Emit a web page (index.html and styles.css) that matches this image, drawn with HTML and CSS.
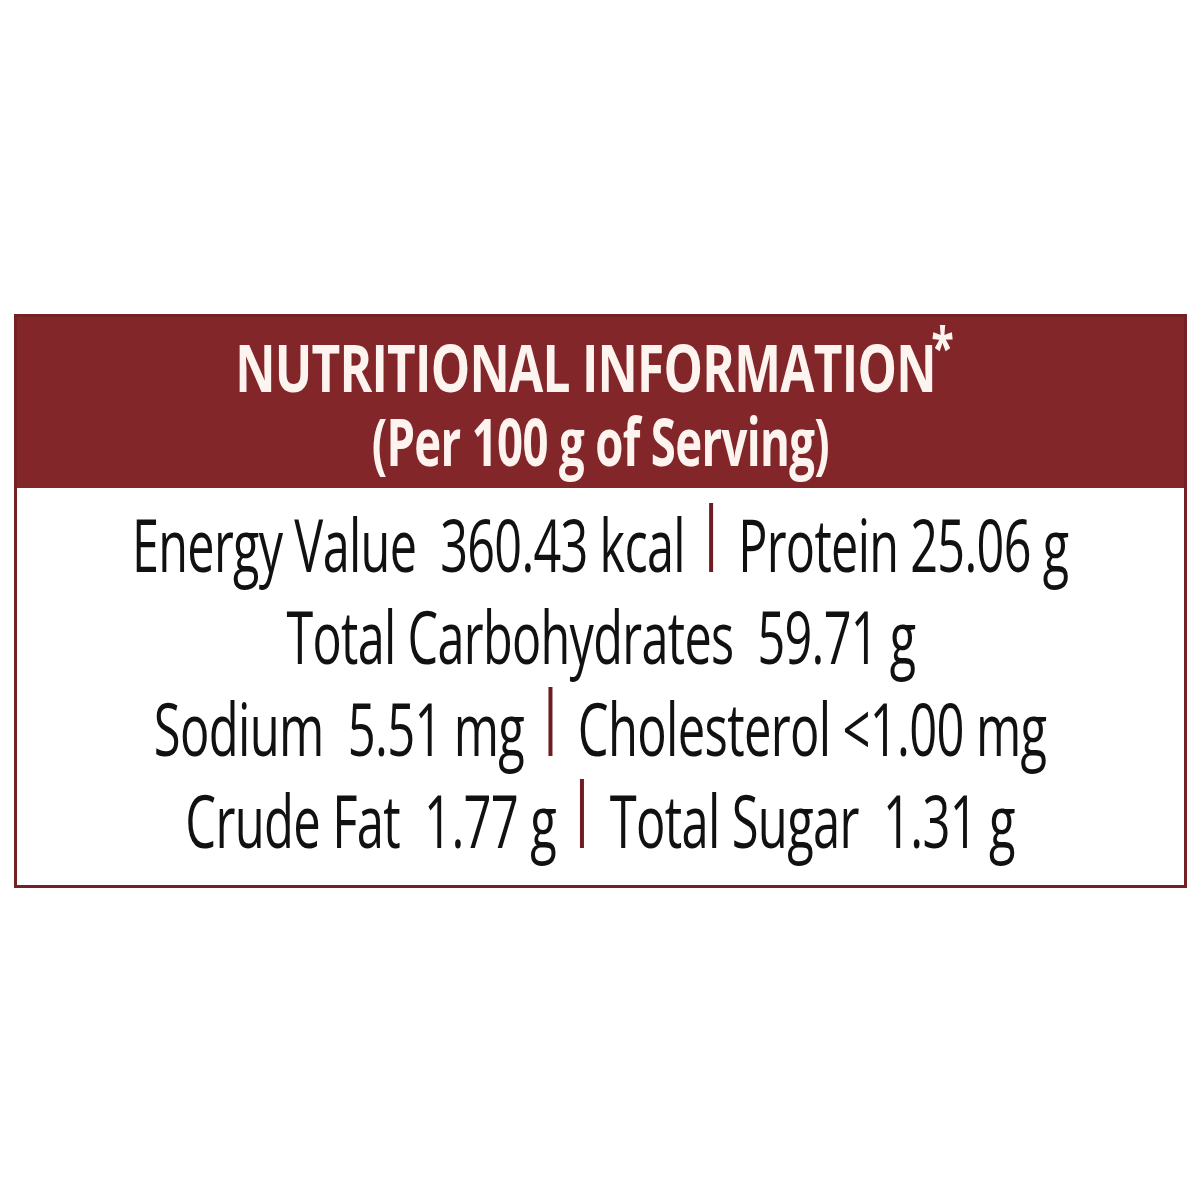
FILE: index.html
```html
<!DOCTYPE html>
<html>
<head>
<meta charset="utf-8">
<link rel="stylesheet" href="styles.css">
</head>
<body>
<div class="page">
  <div class="panel">
    <div class="head">
      <div class="row row-h1"><span class="t h1">NUTRITIONAL INFORMATION<span class="ast">*</span></span></div>
      <div class="row"><span class="t h2">(Per 100 g of Serving)</span></div>
    </div>
    <div class="body">
      <div class="row"><span class="t">Energy Value&nbsp; 360.43 kcal<i class="bar"></i>Protein 25.06 g</span></div>
      <div class="row"><span class="t">Total Carbohydrates&nbsp; 59.71 g</span></div>
      <div class="row"><span class="t w3">Sodium&nbsp; 5.51 mg<i class="bar"></i>Cholesterol &lt;1.00 mg</span></div>
      <div class="row"><span class="t w4">Crude Fat&nbsp; 1.77 g<i class="bar"></i>Total Sugar&nbsp; 1.31 g</span></div>
    </div>
  </div>
</div>
</body>
</html>
```
FILE: styles.css
```css
html, body {
  margin: 0;
  padding: 0;
  background: #ffffff;
}
.page {
  width: 1200px;
  height: 1200px;
  padding: 314px 0 0 14px;
  box-sizing: border-box;
}
.panel {
  width: 1173px;
  border: 3px solid #742024;
  box-sizing: border-box;
  background: #ffffff;
}
.head {
  background: #83262a;
  color: #fdf4ef;
  padding: 12px 0 11px;
  font-family: "Open Sans", sans-serif;
  font-weight: 700;
  font-size: 67px;
  line-height: 74px;
}
.body {
  padding: 10px 0 19px;
  color: #111111;
  font-family: "Open Sans", sans-serif;
  font-weight: 400;
  font-size: 73px;
  line-height: 92px;
}
.row {
  display: flex;
  justify-content: center;
  white-space: nowrap;
}
.row-h1 {
  padding-right: 12px;
}
.t {
  display: inline-block;
  transform-origin: center;
  transform: scaleX(0.665);
  letter-spacing: -1px;
}
.w3, .w4 { transform: scaleX(0.67); }
.h1 { transform: scaleX(0.74); }
.h2 { transform: scaleX(0.68); }
.ast {
  font-size: 56px;
  line-height: 0;
  vertical-align: 25px;
  margin-left: -6px;
}
.bar {
  display: inline-block;
  width: 6px;
  height: 69px;
  background: #6e1e22;
  vertical-align: baseline;
  margin: 0 38px 0 36px;
}
```
